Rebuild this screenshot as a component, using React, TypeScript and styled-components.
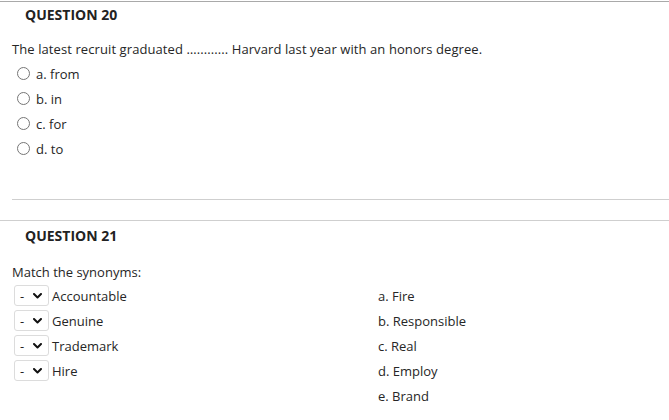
import React from "react";
import styled, { createGlobalStyle } from "styled-components";

const Global = createGlobalStyle`
  html, body { margin: 0; padding: 0; background: #fff; }
  body {
    font-family: "Open Sans", "Noto Sans", sans-serif;
    color: #262626;
    -webkit-font-smoothing: antialiased;
  }
`;

const Page = styled.div`
  width: 669px;
  padding-top: 1px;
`;

const Block = styled.section<{ $padTop: number; $borderColor: string }>`
  border-top: 1px solid ${(p) => p.$borderColor};
  padding-top: ${(p) => p.$padTop}px;
`;

const Title = styled.h2`
  margin: 0;
  padding-left: 25px;
  font-size: 14px;
  line-height: 19px;
  font-weight: 700;
  color: #222;
`;

const Prompt = styled.p<{ $top: number; $spacing?: number }>`
  margin: ${(p) => p.$top}px 0 0;
  padding-left: 12px;
  font-size: 13px;
  line-height: 18px;
  letter-spacing: ${(p) => p.$spacing ?? 0}px;
  color: #262626;
`;

const Options = styled.div`
  margin-top: 3px;
  display: flex;
  flex-direction: column;
`;

const OptionRow = styled.label`
  display: flex;
  align-items: center;
  height: 25px;
  padding-left: 17px;
  font-size: 13px;
  gap: 6px;
`;

const Radio = styled.span`
  width: 13px;
  height: 13px;
  box-sizing: border-box;
  border-radius: 50%;
  border: 1px solid #767676;
  background: #fff;
  flex: none;
`;

const Divider = styled.hr`
  margin: 38px 0 0 12px;
  border: 0;
  border-top: 1px solid #cfcfcf;
  height: 0;
`;

const Spacer = styled.div`
  height: 20px;
`;

const MatchGrid = styled.div`
  margin-top: 2px;
  display: grid;
  grid-template-columns: 364px 1fr;
  padding-left: 14px;
`;

const Column = styled.div`
  display: flex;
  flex-direction: column;
`;

const MatchRow = styled.div`
  display: flex;
  align-items: center;
  height: 25px;
  font-size: 13px;
  gap: 3px;
`;

const SelectBox = styled.div`
  box-sizing: border-box;
  width: 35px;
  height: 21px;
  border: 1px solid #dcdcdc;
  border-radius: 3px;
  background: #fff;
  display: flex;
  align-items: center;
  justify-content: space-between;
  padding: 0 6px 0 5px;
  font-size: 13px;
  color: #222;
  flex: none;
`;

const Chevron = () => (
  <svg width="9" height="6" viewBox="0 0 9 6" aria-hidden>
    <path d="M1 1 L4.5 4.5 L8 1" fill="none" stroke="#111" strokeWidth="2" strokeLinecap="round" strokeLinejoin="round" />
  </svg>
);

const options = ["a. from", "b. in", "c. for", "d. to"];
const terms = ["Accountable", "Genuine", "Trademark", "Hire"];
const answers = ["a. Fire", "b. Responsible", "c. Real", "d. Employ", "e. Brand"];

export default function App() {
  return (
    <Page>
      <Global />
      <Block $padTop={3} $borderColor="#a9a9a9">
        <Title>QUESTION 20</Title>
        <Prompt $top={16} $spacing={0.09}>
          The latest recruit graduated …......... Harvard last year with an honors degree.
        </Prompt>
        <Options>
          {options.map((o) => (
            <OptionRow key={o}>
              <Radio />
              {o}
            </OptionRow>
          ))}
        </Options>
      </Block>
      <Divider />
      <Spacer />
      <Block $padTop={5} $borderColor="#cfcfcf">
        <Title>QUESTION 21</Title>
        <Prompt $top={18}>Match the synonyms:</Prompt>
        <MatchGrid>
          <Column>
            {terms.map((t) => (
              <MatchRow key={t}>
                <SelectBox>
                  <span>-</span>
                  <Chevron />
                </SelectBox>
                {t}
              </MatchRow>
            ))}
          </Column>
          <Column>
            {answers.map((a) => (
              <MatchRow key={a}>{a}</MatchRow>
            ))}
          </Column>
        </MatchGrid>
      </Block>
    </Page>
  );
}
